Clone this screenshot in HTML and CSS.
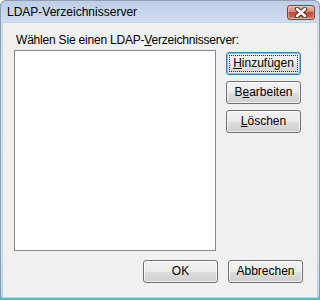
FILE: index.html
```html
<!DOCTYPE html>
<html lang="de">
<head>
<meta charset="utf-8">
<title>LDAP-Verzeichnisserver</title>
<link rel="stylesheet" href="styles.css">
</head>
<body>
<div class="window">
  <div class="titlebar">
    <span class="title">LDAP-Verzeichnisserver</span>
    <button class="close" aria-label="Schließen">
      <svg width="16" height="11" viewBox="0 0 16 11">
        <path d="M4 2 L12 9 M12 2 L4 9" stroke="#5a2a24" stroke-width="4.4" stroke-linecap="round"/>
        <path d="M4 2 L12 9 M12 2 L4 9" stroke="#ffffff" stroke-width="2.6" stroke-linecap="round"/>
      </svg>
    </button>
  </div>
  <div class="client">
    <div class="label">Wählen Sie einen LDAP-<u>V</u>erzeichnisserver:</div>
    <div class="main">
      <div class="listbox"></div>
      <div class="side">
        <button class="btn default"><span><u>H</u>inzufügen</span></button>
        <button class="btn"><span>B<u>e</u>arbeiten</span></button>
        <button class="btn"><span><u>L</u>öschen</span></button>
      </div>
    </div>
    <div class="footer">
      <button class="btn">OK</button>
      <button class="btn">Abbrechen</button>
    </div>
  </div>
</div>
</body>
</html>
```
FILE: styles.css
```css
html, body {
  margin: 0;
  padding: 0;
  background: #ffffff;
}
body {
  font-family: "Liberation Sans", Arial, sans-serif;
  font-size: 12px;
  color: #000;
}
.window {
  width: 320px;
  height: 300px;
  box-sizing: border-box;
  display: flex;
  flex-direction: column;
  border-radius: 6px 6px 0 0;
  background: linear-gradient(to bottom, #bccde5 0px, #cedcef 22px, #d6e2f1 60px, #d3e0f0 260px, #9fd5ee 296px, #3fc3ec 297px, #3fc3ec 299px);
  box-shadow: inset 0 0 0 1px #8e9db2;
  padding: 0 3px 3px 3px;
}
.titlebar {
  height: 23px;
  flex: none;
  display: flex;
  align-items: flex-start;
  justify-content: space-between;
  padding: 0 2px 0 4px;
}
.title {
  line-height: 15px;
  margin-top: 5px;
  color: #000;
}
.close {
  margin-top: 5px;
  width: 28px;
  height: 15px;
  padding: 0;
  border: 1px solid #8a3b33;
  border-radius: 3px;
  background: linear-gradient(to bottom, #e8b3a8 0%, #d98574 45%, #c24a3b 50%, #cf6150 85%, #e39585 100%);
  box-shadow: inset 0 0 0 1px rgba(255,255,255,0.35);
  display: flex;
  align-items: center;
  justify-content: center;
}
.close svg {
  display: block;
}
.client {
  flex: 1;
  background: #f0f0f0;
  padding: 10px 14px 13px 11px;
  display: flex;
  flex-direction: column;
  box-shadow: 0 0 0 1px #c7d3e3;
}
.label {
  line-height: 15px;
  height: 15px;
  padding-left: 2px;
  white-space: nowrap;
  letter-spacing: -0.2px;
}
.main {
  margin-top: 2px;
  display: flex;
  gap: 10px;
}
.listbox {
  width: 202px;
  height: 201px;
  box-sizing: border-box;
  border: 1px solid #828790;
  background: #ffffff;
}
.side {
  margin-top: 2px;
  display: flex;
  flex-direction: column;
  gap: 6px;
}
.btn {
  width: 75px;
  height: 23px;
  box-sizing: border-box;
  border: 1px solid #707070;
  border-radius: 3px;
  background: linear-gradient(to bottom, #f2f2f2 0%, #ebebeb 50%, #dddddd 51%, #cfcfcf 100%);
  box-shadow: inset 0 0 0 1px rgba(255,255,255,0.7);
  font-family: inherit;
  font-size: 12px;
  color: #000;
  padding: 0;
  line-height: 15px;
}
.btn span {
  display: inline-block;
  padding: 0 2px;
}
.btn.default {
  border-color: #3c7fb1;
  box-shadow: inset 0 0 0 1px #48d8fb, inset 0 0 0 2px rgba(255,255,255,0.5);
  background: linear-gradient(to bottom, #f4f4f4 0%, #eeeeee 50%, #e2e2e2 51%, #d6d6d6 100%);
  outline: 1px dotted #2a2a2a;
  outline-offset: -4px;
}
.footer {
  margin-top: 9px;
  display: flex;
  justify-content: flex-end;
  gap: 10px;
}
```
